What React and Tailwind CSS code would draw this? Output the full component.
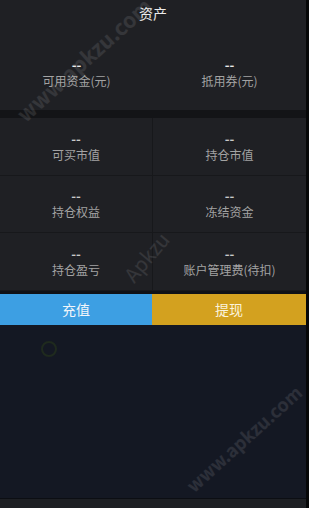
const cells = [
  ['可买市值', '持仓市值'],
  ['持仓权益', '冻结资金'],
  ['持仓盈亏', '账户管理费(待扣)'],
];

function Stat({ label, top }) {
  return (
    <div className="flex flex-col items-center">
      <span className={`text-[13px] font-bold leading-[14px] ${top ? 'text-[#e8e8e8]' : 'text-[#c8c8c8]'}`}>--</span>
      <span className="text-[12px] leading-[17px] text-[#a3a3a3]">{label}</span>
    </div>
  );
}

export default function App() {
  return (
    <div
      className="relative flex h-[508px] w-[309px] overflow-hidden bg-[#060708]"
      style={{ fontFamily: '"Noto Sans CJK SC", "Liberation Sans", sans-serif' }}
    >
      <div className="flex w-[306px] flex-col">
        {/* 顶部资产 */}
        <div className="flex h-[110px] flex-col bg-[#1f2024]">
          <div className="flex h-[26px] items-center justify-center text-[14px] text-[#ececec]">资产</div>
          <div className="mt-[32px] grid grid-cols-2">
            <Stat label="可用资金(元)" top />
            <Stat label="抵用券(元)" top />
          </div>
        </div>
        <div className="h-[8px] bg-[#131417]" />

        {/* 明细 */}
        <div className="flex flex-col bg-[#1f2024]">
          {cells.map((row, i) => (
            <div key={i} className="grid h-[57.5px] grid-cols-2 border-b border-[#17181b]">
              {row.map((label, j) => (
                <div
                  key={label}
                  className={`flex items-center justify-center pt-[2px] ${j === 0 ? 'border-r border-[#17181b]' : ''}`}
                >
                  <Stat label={label} />
                </div>
              ))}
            </div>
          ))}
        </div>
        <div className="h-[3px] bg-[#0f1116]" />

        {/* 按钮 */}
        <div className="grid h-[31px] grid-cols-[152px_1fr]">
          <button className="bg-[#3d9fe3] text-[14px] text-[#f2f6fa]">充值</button>
          <button className="bg-[#d3a11f] text-[14px] text-[#fbf3dc]">提现</button>
        </div>

        <div className="relative flex-1 bg-[#141823]">
          <div className="absolute left-[41px] top-[16px] h-[16px] w-[16px] rounded-full border-2 border-[#1f2a1e]" />
        </div>
        <div className="h-[10px] border-t border-[#0c0e13] bg-[#1e2024]" />
      </div>

      {/* 水印 */}
      <div className="pointer-events-none absolute left-[-2px] top-[44px] -rotate-[42deg] text-[21px] font-bold text-white/10">
        www.apkzu.com
      </div>
      <div className="pointer-events-none absolute left-[118px] top-[242px] -rotate-[50deg] text-[20px] text-white/10">
        Apkzu
      </div>
      <div className="pointer-events-none absolute left-[170px] top-[425px] -rotate-[42deg] text-[18px] font-bold text-white/10">
        www.apkzu.com
      </div>
    </div>
  );
}
